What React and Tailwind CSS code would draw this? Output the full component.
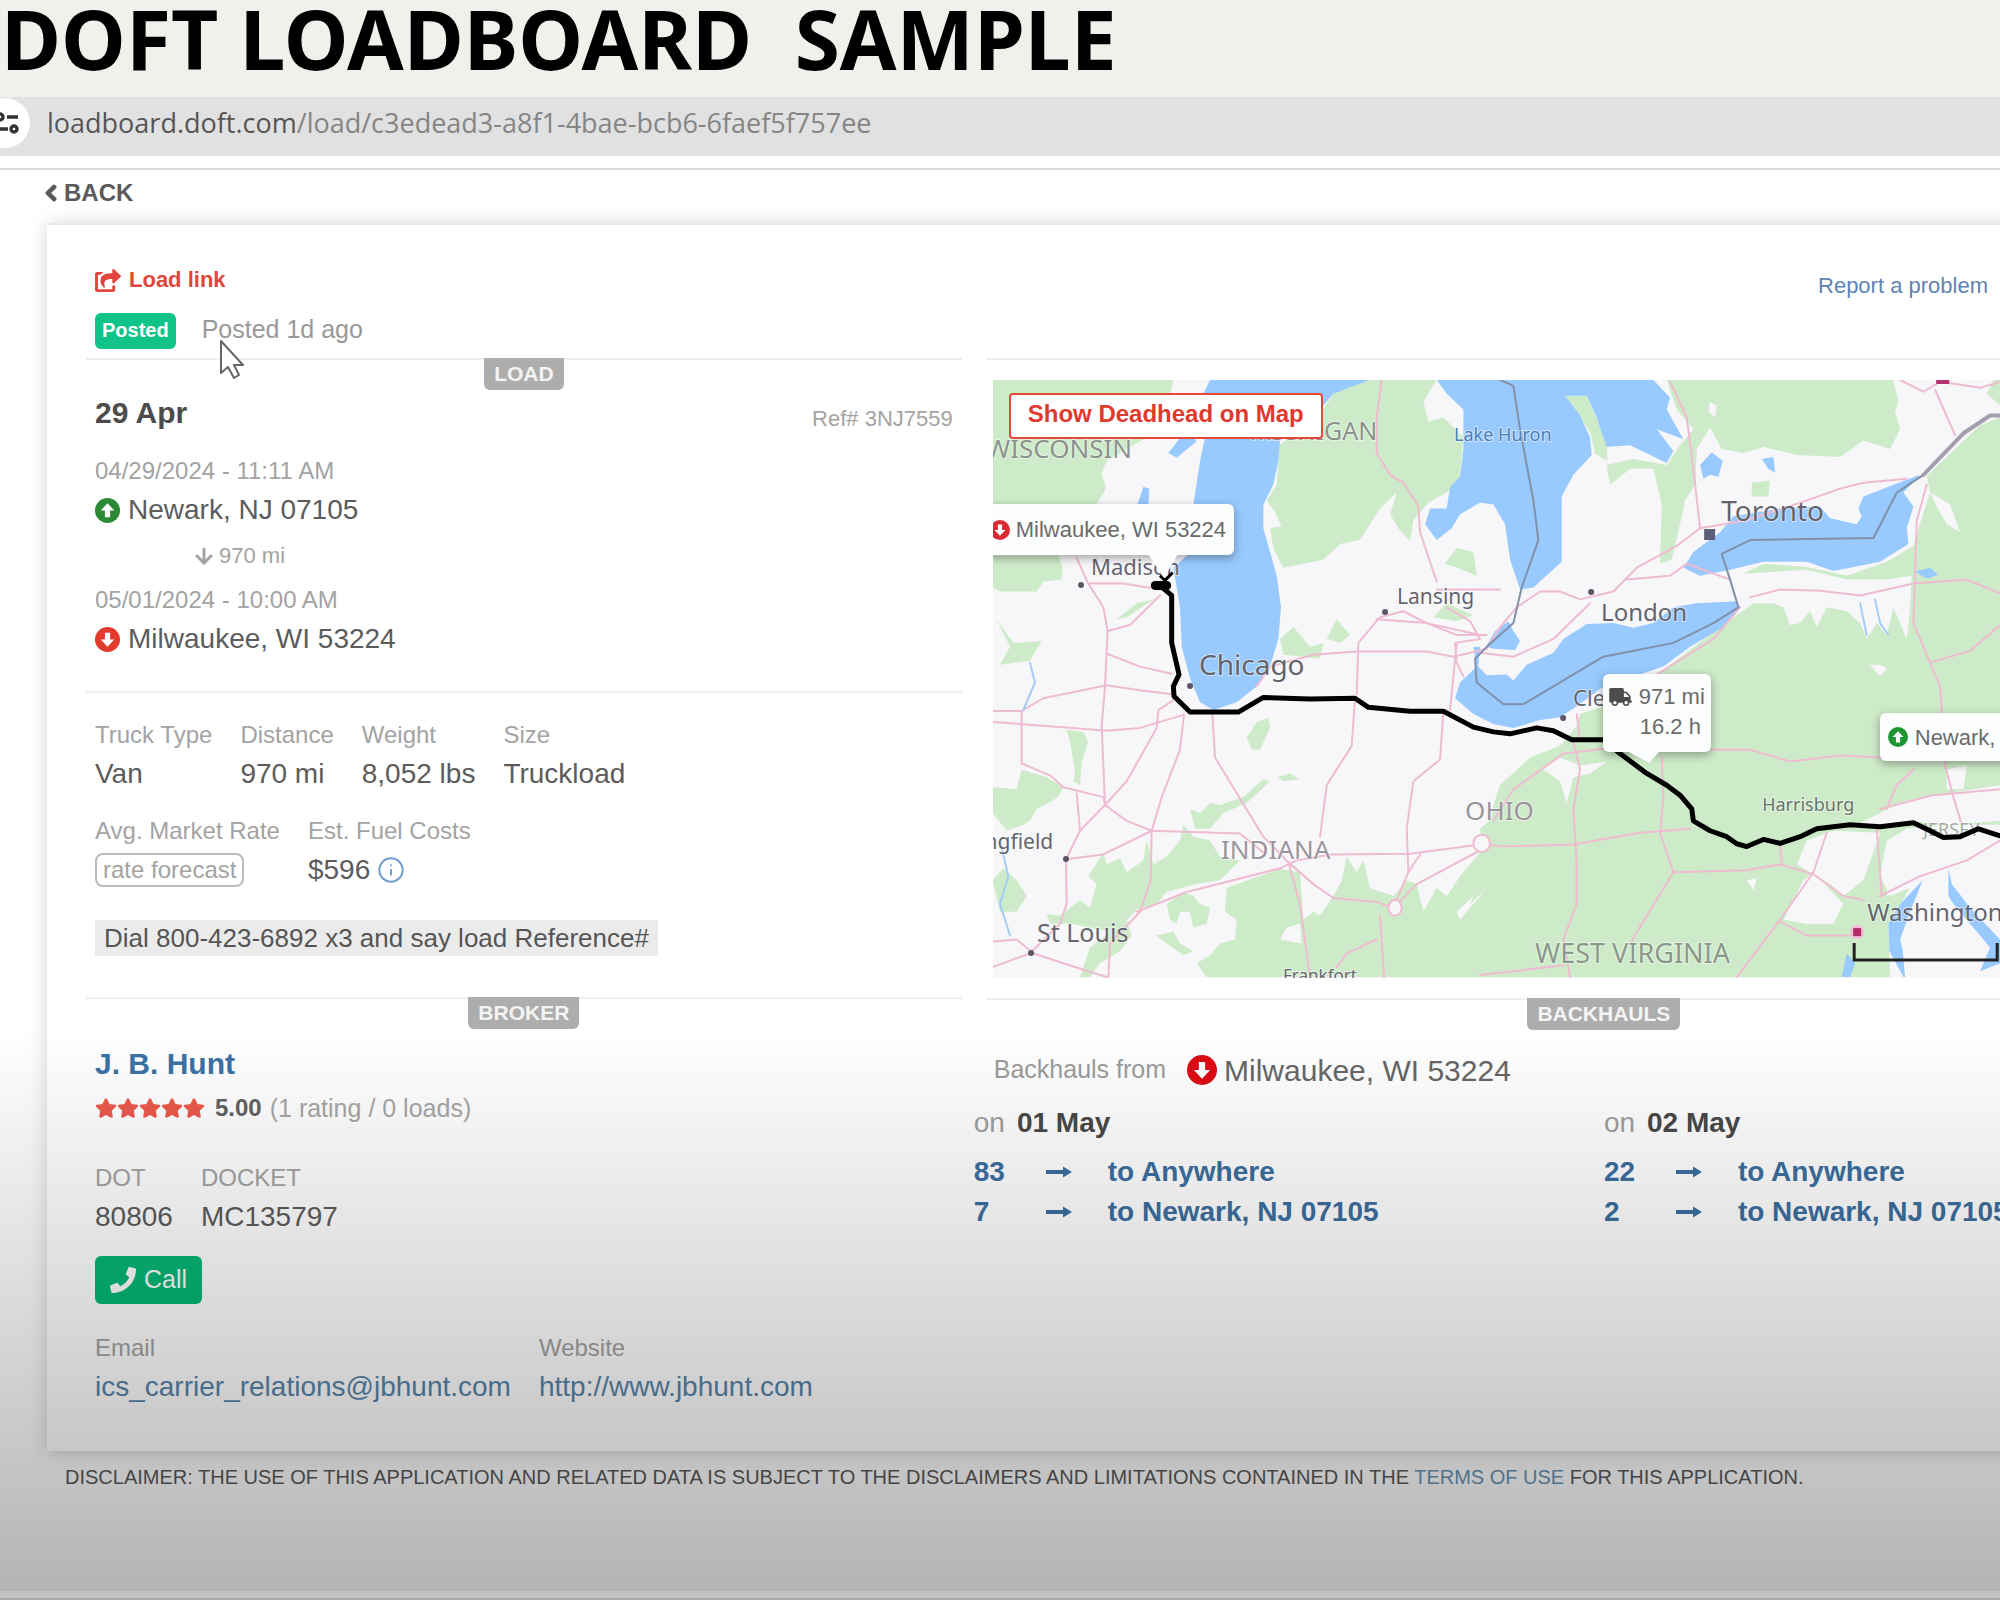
import React from "react";
import { ArrowDown, Info } from "lucide-react";
import { FaChevronLeft, FaPhone, FaShareSquare, FaStar, FaTruck } from "react-icons/fa";

const ARIAL = "font-['Liberation_Sans',Arial,sans-serif]";

function StopIcon({ down = false, className = "" }) {
  return (
    <svg viewBox="0 0 24 24" className={`shrink-0 ${className}`} aria-hidden="true">
      <circle cx="12" cy="12" r="12" fill="currentColor" />
      <path
        d={down ? "M9.5 5.5h5v6.5h4L12 19 5.5 12h4z" : "M9.5 18.5h5V12h4L12 5 5.5 12h4z"}
        fill="#fff"
      />
    </svg>
  );
}

function LongArrow() {
  return (
    <svg viewBox="0 0 26 14" className="h-[14px] w-[26px]" aria-hidden="true">
      <path d="M0 5h17V1.5L26 7l-9 5.5V9H0z" fill="currentColor" />
    </svg>
  );
}

function TuneIcon() {
  return (
    <svg viewBox="0 0 24 24" className="h-6 w-6" fill="none" stroke="#333" strokeWidth="3.4" aria-hidden="true">
      <circle cx="5" cy="6" r="3" />
      <path d="M12 6h11M0 18h13" />
      <circle cx="19" cy="18" r="3" />
    </svg>
  );
}

function SectionTag({ children }) {
  return (
    <div className="flex justify-center border-t-2 border-[#efefef]">
      <h2 className="-mt-0.5 h-8 rounded-b-md bg-[#adadad] px-2.5 text-[21px] leading-8 font-bold text-[#f4f4f4]">
        {children}
      </h2>
    </div>
  );
}

function Fact({ label, children }) {
  return (
    <div>
      <dt className="text-2xl leading-8 text-[#a3a3a3]">{label}</dt>
      <dd className="mt-[5px] flex h-9 items-center text-[28px] leading-9 text-[#5c5c5c]">{children}</dd>
    </div>
  );
}

const WATER = [
  "M690 25H1170L1060 60 1030 90 900 180 895 230 880 290 850 340 850 400 870 460 890 520 903 600 895 680 870 750 830 800 770 840 700 860 660 840 630 780 605 700 600 600 580 500 620 470 640 340 660 230 690 110 670 60Z",
  "M565 210L620 150 650 180 590 222Z",
  "M470 345L490 295 508 300 505 345Z",
  "M1370 25L1400 60 1450 100 1450 200 1440 270 1410 295 1400 350 1350 350 1335 390 1370 430 1415 400 1440 365 1500 335 1540 340 1575 390 1590 480 1620 555 1660 550 1745 485 1745 320 1780 265 1835 215 1830 170 1800 115 1755 65 1820 65 1850 120 1880 195 1950 190 2060 235 2080 205 2030 150 2110 175 2060 100 2070 70 2020 25Z",
  "M1518 700L1545 660 1585 635 1600 660 1620 685 1605 708 1540 705Z",
  "M1480 700L1490 750 1440 790 1425 830 1480 870 1540 895 1600 905 1680 885 1740 878 1790 850 1870 800 2050 750 2130 700 2230 650 2280 600 2270 585 2150 590 2080 600 2020 640 1960 652 1900 640 1820 642 1750 680 1720 715 1640 745 1600 785 1580 770 1520 772 1495 750 1500 700Z",
  "M2110 500L2140 460 2220 410 2260 370 2400 350 2520 345 2550 375 2630 390 2645 370 2635 350 2650 320 2740 290 2820 265 2770 310 2800 345 2780 400 2785 440 2700 485 2560 508 2480 485 2350 485 2250 505 2160 520Z",
  "M2170 275L2160 240 2195 208 2228 230 2215 270 2190 265Z",
  "M2345 225L2380 220 2385 260 2365 250Z",
  "M2828 1290L2760 1350 2725 1400 2728 1470 2770 1535H3060V1500L3000 1520 3030 1460 2950 1390 2905 1330 2905 1260 2915 1300 2970 1360 3060 1440V1535H2790L2760 1440 2790 1370Z",
  "M2805 510L2850 500 2875 518 2840 528Z",
  "M2585 1535L2600 1475 2625 1500 2610 1535Z",
];

const LAND_OVER_WATER = ["M2765 1440L2800 1385 2900 1330 2960 1390 3020 1450 2990 1535H2775Z"];

const WOODS = [
  "M38 25H580L570 60 600 100 560 150 480 180 380 230 365 262 378 300 345 345H38Z",
  "M38 470H235L248 500 245 530 190 535 170 560 60 560 38 550Z",
  "M1060 60L1140 25H1370L1330 80 1345 130 1390 120 1450 170 1440 270 1400 310 1345 335 1300 380 1290 432 1255 400 1230 365 1250 310 1200 350 1140 430 1080 440 1030 480 910 500 880 450 870 400 905 395 885 360 860 330 890 290 898 190 1030 100Z",
  "M1560 1060L1540 1130 1500 1160 1510 1210 1440 1280 1400 1330 1370 1310 1330 1370 1310 1300 1280 1290 1240 1330 1170 1310 1150 1240 1130 1270 1100 1230 1085 1290 1060 1330 1020 1380 1000 1370 970 1390 960 1270 900 1262 820 1285 740 1310 735 1370 770 1390 765 1440 720 1450 690 1480 650 1500 680 1535H1620V1060Z",
  "M200 1375L240 1380 300 1340 330 1360 350 1300 325 1280 370 1220 380 1250 420 1235 440 1270 490 1240 500 1190 520 1250 560 1230 600 1190 610 1150 640 1180 690 1190 720 1230 780 1240 720 1290 650 1300 560 1320 530 1350 470 1365 440 1390 455 1430 420 1470 360 1500 330 1535H300L330 1460 390 1420 270 1400 210 1400Z",
  "M560 1350L610 1320 640 1330 660 1350 690 1360 680 1400 640 1410 630 1370 600 1370 590 1400 570 1390Z",
  "M530 1430L580 1420 600 1450 640 1470 610 1480 560 1450Z",
  "M38 1055L110 1060 125 1010 200 1030 250 1055 235 1080 195 1100 170 1110 150 1140 130 1150 80 1165 38 1120Z",
  "M50 630L100 690 185 685 150 735 60 745 90 700Z",
  "M38 1290L70 1260 110 1290 140 1330 110 1370 60 1370Z",
  "M645 1160L630 1110 660 1120 690 1095 720 1100 790 1080 850 1035 870 1040 800 1095 730 1120 690 1160Z",
  "M800 930L830 890 865 880 870 905 840 960 815 960Z",
  "M890 1030L930 1020 960 1035 910 1040Z",
  "M900 680L940 650 990 700 1030 690 1020 730 910 720Z",
  "M1040 680L1070 630 1110 670 1080 690Z",
  "M1395 490L1430 450 1480 460 1490 520 1430 500Z",
  "M1360 625L1400 590 1480 620 1430 635Z",
  "M410 630L470 590 520 580 440 625Z",
  "M285 1010L270 940 260 910 310 915 325 940 305 990 300 1050 280 1040Z",
  "M1755 65H1820L1880 180 1882 230 1845 212 1832 160Z",
  "M2060 25H2740L2755 80 2745 105 2760 150 2730 200 2650 178 2580 220 2450 215 2350 195 2290 210 2225 200 2190 145 2150 200 2145 290 2115 330 2105 370 2075 480 2040 490 2045 340 2020 250 1950 250 1890 290 1880 240 1960 225 2060 240 2100 190 2140 150 2090 100Z",
  "M2315 320L2315 285 2370 280 2365 320Z",
  "M3060 120L3000 140 2840 268 2850 310 2815 400 2800 445 2720 485 2600 520 2480 498 2350 490 2290 515 2480 505 2600 530 2720 530 2795 520 2790 600 2780 680 2740 600 2720 670 2690 640 2660 680 2640 640 2600 610 2540 600 2510 650 2490 610 2460 640 2430 645 2410 600 2380 590 2320 590 2220 650 2040 765 1870 850 1800 870 1790 900 1740 950 1650 980 1560 1050 1540 1100 1520 1210 1610 1215 1560 1310 1470 1400V1535H2730L2725 1400 2790 1310 2730 1330 2700 1280 2720 1190 2780 1160 2900 1150 3060 1150Z",
  "M3060 25H3040L3020 60 3060 90Z",
];

const CLEARINGS = [
  "M1690 1010L1740 980 1800 1000 1880 990 1830 1020 1780 1030 1760 1095 1740 1040Z",
  "M2410 1390L2470 1290 2500 1270 2590 1350 2560 1400 2480 1400Z",
  "M2450 1250L2480 1190 2560 1165 2700 1170 2650 1290 2590 1330 2550 1300Z",
  "M2630 1150L2760 1095 2860 1075 3060 1050V1140L2900 1150 2800 1140 2700 1155Z",
  "M2670 745L2700 745 2720 755 2700 775Z",
  "M2850 310L2910 340 2940 410 2900 390 2870 345Z",
  "M2300 1290L2330 1285 2320 1315Z",
  "M2900 1010L2960 1000 2950 1060 2900 1060Z",
  "M900 1440L920 1410 960 1400 965 1450Z",
  "M1430 1370L1480 1330 1470 1350 1520 1310 1440 1390Z",
  "M2740 1180L2850 1180 2900 1230 2830 1290 2720 1330Z",
  "M2190 80L2210 90 2205 120 2185 105Z",
];

const ROADS = [
  "M38 1445L110 1440 160 1475 250 1500 380 1535M38 1510L150 1475 240 1400 260 1350 258 1237 300 1165 375 1100 440 1040 530 905 535 860 580 835",
  "M38 862H125L190 830 380 797 480 810 578 820M38 890L200 900 380 912 480 905 610 872",
  "M125 862V995L210 1025 250 1055 370 1080 375 1100 440 1140 515 1165 780 1172 850 1220",
  "M290 475L325 540 370 600 383 660 375 800 365 900 375 1100M325 540L430 540 540 555",
  "M383 660L450 645 540 570M383 718L480 750 575 768M290 1070L300 1165M258 1237L370 1225 515 1165",
  "M612 870L600 960 545 1080 515 1165 512 1290 480 1370 390 1450 385 1535",
  "M697 870L705 980 850 1180 925 1245 960 1350 990 1535M470 1370L620 1320 900 1260 950 1240 1050 1225 1290 1223 1500 1200",
  "M925 1245L1000 1300 1060 1335 1190 1345 1240 1360 1310 1300 1500 1215M1200 1380L1212 1535M1190 1440L1100 1475 1070 1510",
  "M1205 25L1190 120 1190 210 1230 265 1270 285 1315 345 1320 410 1370 535M1370 555H1560",
  "M830 800L870 750 1000 720 1130 712 1340 712 1420 725 1520 705M1130 820L1135 690 1200 625 1270 610 1340 640 1500 670",
  "M1190 630L1340 640 1430 670 1520 670M1400 600L1470 635 1500 680 1425 690 1430 740 1450 775M1430 690L1410 860",
  "M1125 830L1115 950 1040 1050 1020 1180M1390 863L1380 985 1300 1040 1280 1160 1285 1270M1250 1340L1285 1270 1320 1225",
  "M1520 705L1560 650 1610 600 1680 560H1740L1800 580 1900 560 1970 500 2090 445 2160 400 2140 250 2120 120 2070 30",
  "M1500 715L1600 725 1720 680 1830 590M1940 530L2070 520 2120 490 2250 530",
  "M2160 400L2300 380 2480 330 2580 300 2650 285 2780 275M2760 25L2830 55 2880 30 3000 45 3060 30M2865 50L2925 165",
  "M2310 575L2400 555 2520 558 2640 570 2800 540 2960 530 3060 565M2840 290L2810 380 2800 640 2850 740 2880 800 2895 1000 2920 1080 2945 1150",
  "M2850 740L2970 710 3060 645M2030 770L2200 680 2280 600M1800 935L1790 870",
  "M1500 1195L1560 1205 1780 1200 1980 1170 2060 1165 2130 1160M1780 940L1800 1010 1780 1110 1790 1250 1790 1350 1750 1440 1770 1535",
  "M1540 1140L1600 1060 1750 970 1900 955M2195 960L2310 960 2430 990 2580 975 2700 980M2045 980L2050 1080 2040 1170 2080 1270 2000 1380 1950 1450",
  "M2080 1270L2300 1265 2400 1250 2500 1275 2590 1330 2650 1340M2400 1200L2405 1245M2540 1170L2500 1270 2400 1390 2270 1535M2400 1395L2480 1430 2640 1430",
  "M2700 1110L2860 1075 3060 1060M2720 1110L2750 1050 2800 1010M2700 1330L2820 1280 2960 1240 3060 1190M2690 1160L2705 1330M1500 1530L1750 1505",
];

const BORDERS = [
  "M1560 25L1600 40 1620 150 1660 330 1675 430 1625 550 1600 640 1520 700 1485 730 1490 790 1570 845 1630 845 1740 790 1870 725 2080 690 2200 640 2275 600 2250 530 2225 465 2310 430 2680 425 2750 310 2830 265",
];

const ROUTE =
  "M540 545L575 570 575 690 597 770 580 800 582 825 630 865 775 865 850 828 990 832 1125 830 1165 853 1290 863 1390 863 1480 903 1540 915 1590 920 1670 905 1720 912 1775 935 1870 935 1920 970 2000 1020 2060 1050 2100 1075 2135 1110 2140 1140 2190 1165 2240 1180 2270 1198 2300 1205 2350 1187 2400 1197 2460 1180 2510 1160 2610 1150 2700 1155 2800 1145 2850 1165 2890 1182 2940 1180 2995 1160 3060 1178 3300 1180";

const LABELS = [
  { x: -7, y: 78, size: 26, fill: "#8c928c", text: "WISCONSIN" },
  { x: 257, y: 60, size: 25, fill: "#8c928c", text: "MICHIGAN" },
  { x: 461, y: 61, size: 18, fill: "#4f7db3", text: "Lake Huron" },
  { x: 98, y: 195, size: 22, fill: "#65656e", text: "Madison" },
  { x: 206, y: 295, size: 28, fill: "#63636c", text: "Chicago" },
  { x: 404, y: 224, size: 21, fill: "#65656e", text: "Lansing" },
  { x: 228, y: 479, size: 26, fill: "#9a949c", text: "INDIANA" },
  { x: 472, y: 440, size: 26, fill: "#9a949c", text: "OHIO" },
  { x: 44, y: 562, size: 25, fill: "#65656e", text: "St Louis" },
  { x: -47, y: 469, size: 21, fill: "#65656e", text: "Springfield" },
  { x: 290, y: 601, size: 17, fill: "#65656e", text: "Frankfort" },
  { x: 728, y: 141, size: 28, fill: "#63636c", text: "Toronto" },
  { x: 608, y: 241, size: 24, fill: "#63636c", text: "London" },
  { x: 580, y: 326, size: 22, fill: "#65656e", text: "Cleveland" },
  { x: 769, y: 431, size: 18, fill: "#68736a", text: "Harrisburg" },
  { x: 930, y: 456, size: 18, fill: "#a3ada3", text: "JERSEY" },
  { x: 542, y: 583, size: 27, fill: "#8a998a", text: "WEST VIRGINIA" },
  { x: 874, y: 541, size: 24, fill: "#63636c", text: "Washington" },
];

const TOWNS = [
  [88, 205],
  [392, 232],
  [73, 479],
  [38, 573],
  [598, 212],
  [570, 338],
  [197, 306],
];

function MapPicture() {
  return (
    <svg viewBox="0 0 1222 598" preserveAspectRatio="xMinYMin slice" className="block h-full w-full" role="img" aria-label="Route map">
      <rect width="1222" height="598" fill="#f7f7fa" />
      <rect x="1007" width="215" height="598" fill="#cdebc8" />
      <g transform="translate(-13 -10) scale(.3333 .3954)" strokeLinejoin="round" strokeLinecap="round">
        {WOODS.map((d) => <path key={d} d={d} fill="#cdebc8" />)}
        {CLEARINGS.map((d) => <path key={d} d={d} fill="#f7f7fa" />)}
        {WATER.map((d) => <path key={d} d={d} fill="#98caff" />)}
        {LAND_OVER_WATER.map((d) => <path key={d} d={d} fill="#f7f7fa" />)}
        <g fill="none" stroke="#efbbd0" strokeWidth="2">
          {ROADS.map((d) => <path key={d} d={d} vectorEffect="non-scaling-stroke" />)}
          <ellipse cx="1505" cy="1197" rx="25" ry="22" fill="#f7f7fa" vectorEffect="non-scaling-stroke" />
          <ellipse cx="1245" cy="1360" rx="20" ry="20" fill="#f7f7fa" vectorEffect="non-scaling-stroke" />
        </g>
        <g fill="none" strokeWidth="2">
          <path d="M150 740L165 790 130 860M60 1190L85 1280 60 1350 90 1430M2640 590L2660 670M2685 580L2700 640 2725 670" stroke="#a4cdf5" vectorEffect="non-scaling-stroke" />
          {BORDERS.map((d) => <path key={d} d={d} stroke="#8090a8" vectorEffect="non-scaling-stroke" />)}
          <path d="M2830 265L2950 160 3030 115 3300 118" stroke="#a49fae" strokeWidth="4" vectorEffect="non-scaling-stroke" />
        </g>
      </g>
      <g fontFamily="'Noto Sans', sans-serif">
        {LABELS.map((l) => (
          <text key={l.text} x={l.x} y={l.y} fontSize={l.size} fill={l.fill} stroke="#ffffff" strokeOpacity=".5" strokeWidth="2" paintOrder="stroke">
            {l.text}
          </text>
        ))}
      </g>
      {TOWNS.map(([x, y]) => <circle key={`${x}-${y}`} cx={x} cy={y} r="3" fill="#5d5566" />)}
      <rect x="711" y="149" width="11" height="11" fill="#5d5d78" />
      <path d="M943 0h13v4h-13z" fill="#b5306f" />
      <circle cx="864" cy="552" r="7" fill="#f4bcd6" />
      <rect x="860" y="548" width="8" height="8" fill="#b02a64" />
      <g transform="translate(-13 -10) scale(.3333 .3954)" fill="none" stroke="#000" strokeLinejoin="round">
        <path d={ROUTE} strokeWidth="5" vectorEffect="non-scaling-stroke" />
        <path d="M526 545H560" strokeWidth="9" strokeLinecap="round" vectorEffect="non-scaling-stroke" />
        <path d="M540 520L555 532 578 512" strokeWidth="3" vectorEffect="non-scaling-stroke" />
      </g>
      <path d="M861 563v17h143v-17" fill="none" stroke="#222" strokeWidth="3" />
    </svg>
  );
}

const CALLOUT = "absolute rounded-md bg-[#fcfdfd] text-[22px] text-[#6a6a6a] shadow-[0_3px_10px_rgba(0,0,0,0.35)]";

function RouteMap() {
  return (
    <div className="relative mx-[7px] my-5 h-[598px] overflow-hidden">
      <MapPicture />
      <button
        type="button"
        className="absolute top-[13px] left-4 h-[46px] rounded border-2 border-[#e8483c] bg-white px-[17px] pb-1 text-2xl font-bold text-[#e0392e]"
      >
        Show Deadhead on Map
      </button>
      <div className={`${CALLOUT} top-[124px] -left-[9px] flex h-[51px] items-center gap-1.5 pr-2 pl-1.5`}>
        <StopIcon down className="h-5 w-5 text-[#dd2b35]" />
        Milwaukee, WI 53224
        <svg viewBox="0 0 30 24" className="absolute top-[50px] left-[164px] h-6 w-[30px]" aria-hidden="true">
          <path d="M0 0h30L16 24z" fill="#fcfdfd" />
        </svg>
      </div>
      <div className={`${CALLOUT} top-[294px] left-[610px] h-[78px] px-1.5 pt-2 leading-[30px]`}>
        <div className="flex items-center gap-[7px]">
          <FaTruck className="h-[18px] w-[23px] text-[#4c4c4c]" />
          971 mi
        </div>
        <div className="pl-[31px]">16.2 h</div>
        <svg viewBox="0 0 62 24" className="absolute top-[66px] left-0 h-6 w-[62px]" aria-hidden="true">
          <path d="M2 0h60L57 11 46 23 22 10 4 6z" fill="#fcfdfd" />
        </svg>
      </div>
      <div className={`${CALLOUT} top-[333px] left-[887px] flex h-12 items-center gap-[7px] px-2`}>
        <StopIcon className="h-5 w-5 text-[#1f9432]" />
        Newark, NJ 07105
      </div>
    </div>
  );
}

const BACKHAULS = [
  { day: "01 May", any: 83, home: 7 },
  { day: "02 May", any: 22, home: 2 },
];

function Backhauls() {
  return (
    <div className="mt-5">
      <div className="flex h-10 items-center px-2 text-[25px] text-[#9b9b9b]">
        Backhauls from
        <StopIcon down className="ml-[21px] h-[30px] w-[30px] text-[#dd0a14]" />
        <span className="ml-[7px] text-[30px] text-[#666]">Milwaukee, WI 53224</span>
      </div>
      <div className="-mx-3 mt-[15px] grid grid-cols-2">
        {BACKHAULS.map((b) => (
          <div key={b.day}>
            <h3 className="text-[28px] leading-9 font-bold text-[#484848]">
              <span className="mr-[12px] font-normal text-[#a0a0a0]">on</span>
              {b.day}
            </h3>
            <ul className="mt-[11px] text-[28px] leading-10 font-bold text-[#3c6f9f]">
              {[[b.any, "to Anywhere"], [b.home, "to Newark, NJ 07105"]].map(([n, to]) => (
                <li key={to}>
                  <a href="#backhauls" className="grid grid-cols-[72px_62px_auto] items-center justify-start whitespace-nowrap">
                    <span>{n}</span>
                    <LongArrow />
                    <span>{to}</span>
                  </a>
                </li>
              ))}
            </ul>
          </div>
        ))}
      </div>
    </div>
  );
}

function LoadDetails() {
  return (
    <div className="px-[9px]">
      <div className="mt-[5px] flex items-center justify-between">
        <h3 className="text-[30px] leading-9 font-bold text-[#4b4b4b]">29 Apr</h3>
        <span className="mt-3 text-[22px] leading-6 text-[#a3a3a3]">Ref# 3NJ7559</span>
      </div>
      <p className="mt-6 text-2xl leading-8 text-[#a3a3a3]">04/29/2024 - 11:11 AM</p>
      <p className="mt-[5px] flex items-center gap-2 text-[28px] leading-9 text-[#5c5c5c]">
        <StopIcon className="h-[25px] w-[25px] text-[#2a8a36]" />
        Newark, NJ 07105
      </p>
      <p className="mt-[14px] ml-[97px] flex items-center gap-[3px] text-[22px] leading-7 text-[#a3a3a3]">
        <ArrowDown className="h-6 w-6" strokeWidth={3} />
        970 mi
      </p>
      <p className="mt-[14px] text-2xl leading-8 text-[#a3a3a3]">05/01/2024 - 10:00 AM</p>
      <p className="mt-[5px] flex items-center gap-2 text-[28px] leading-9 text-[#5c5c5c]">
        <StopIcon down className="h-[25px] w-[25px] text-[#e33a2e]" />
        Milwaukee, WI 53224
      </p>
    </div>
  );
}

function Equipment() {
  return (
    <div className="px-[9px] pb-[41px]">
      <dl className="mt-[26px] flex gap-7">
        <Fact label="Truck Type">Van</Fact>
        <Fact label="Distance">970 mi</Fact>
        <Fact label="Weight">8,052 lbs</Fact>
        <Fact label="Size">Truckload</Fact>
      </dl>
      <dl className="mt-[23px] flex gap-7">
        <Fact label="Avg. Market Rate">
          <button type="button" className="h-[34px] rounded-lg border-2 border-[#bcbcbc] px-1.5 text-2xl leading-7 text-[#a3a3a3]">
            rate forecast
          </button>
        </Fact>
        <Fact label="Est. Fuel Costs">
          $596
          <Info className="ml-[7px] h-7 w-7 text-[#6f9ccb]" strokeWidth={1.7} />
        </Fact>
      </dl>
      <p className="mt-8 w-fit bg-[#ebebeb] px-[9px] text-[26px] leading-9 text-[#555]">
        Dial 800-423-6892 x3 and say load Reference#
      </p>
    </div>
  );
}

function Broker() {
  return (
    <div className="px-[9px]">
      <a href="#broker" className="mt-[17px] block w-fit text-[30px] leading-9 font-bold text-[#3b71a5]">J. B. Hunt</a>
      <div className="mt-2.5 flex items-center text-[25px] leading-8 text-[#a6a6a6]">
        <span className="flex text-[22px] text-[#ec5a4c]">
          {[1, 2, 3, 4, 5].map((n) => <FaStar key={n} />)}
        </span>
        <b className="mr-2 ml-2.5 text-2xl text-[#626262]">5.00</b>
        (1 rating / 0 loads)
      </div>
      <dl className="mt-[38px] flex gap-7">
        <Fact label="DOT">80806</Fact>
        <Fact label="DOCKET">MC135797</Fact>
      </dl>
      <button type="button" className="mt-[21px] flex h-12 items-center gap-2 rounded-md bg-[#04b877] px-[15px] text-[25px] text-white">
        <FaPhone className="h-[26px] w-[26px]" />
        Call
      </button>
      <dl className="mt-7 flex gap-7">
        <Fact label="Email">
          <a href="mailto:ics_carrier_relations@jbhunt.com" className="text-[#5785ab]">ics_carrier_relations@jbhunt.com</a>
        </Fact>
        <Fact label="Website">
          <a href="http://www.jbhunt.com" className="text-[#5785ab]">http://www.jbhunt.com</a>
        </Fact>
      </dl>
    </div>
  );
}

export default function App() {
  return (
    <div className={`relative min-h-screen overflow-hidden bg-white ${ARIAL}`}>
      <h1 className="h-[97px] bg-[#f1f0eb] pl-px font-['Noto_Sans',sans-serif] text-[82px] leading-[76px] font-bold whitespace-pre text-black">
        DOFT LOADBOARD  SAMPLE
      </h1>
      <div className="flex h-[59px] items-center bg-[#e1e1e1] pb-2">
        <div className="-ml-5 flex h-[50px] w-[50px] items-center justify-end rounded-full bg-white pr-[11px]">
          <TuneIcon />
        </div>
        <p className="ml-[17px] font-['Open_Sans',sans-serif] text-[27px] leading-9 text-[#858585]">
          <span className="text-[#555]">loadboard.doft.com</span>/load/c3edead3-a8f1-4bae-bcb6-6faef5f757ee
        </p>
      </div>
      <div className="mt-3 h-0.5 bg-[#dcdcdc]" />

      <main className="pl-[47px]">
        <a href="#back" className="mt-[7px] -ml-0.5 flex w-fit items-center gap-[7px] text-2xl leading-8 font-bold text-[#5a5a5a]">
          <FaChevronLeft className="h-[18px] w-3" strokeWidth={50} stroke="currentColor" />
          BACK
        </a>
        <div className="mt-[14px] -mr-[261px] border-t-2 border-[#e8e8e8] bg-white px-[39px] pt-[39px] pb-[46px] shadow-[0_2px_18px_rgba(0,0,0,0.18)]">
          <header className="mr-[234px] flex justify-between pb-[9px] pl-[9px]">
            <div>
              <a href="#load-link" className="flex items-center gap-2 text-[22px] leading-8 font-bold text-[#e0463b]">
                <FaShareSquare className="h-[23px] w-[26px]" />
                Load link
              </a>
              <div className="relative mt-[17px] flex items-start gap-[26px]">
                <span className="h-9 rounded-md bg-[#0fc389] px-[7px] text-[20px] leading-[34px] font-bold text-white">Posted</span>
                <span className="text-[25px] leading-8 text-[#999]">Posted 1d ago</span>
                <svg viewBox="0 0 26 40" className="absolute top-[26px] left-[124px] h-10 w-[26px]" aria-hidden="true">
                  <path d="M2 2v32l7-6 6 11 5-3-5-10h9z" fill="#fff" stroke="#666" strokeWidth="2" strokeLinejoin="round" />
                </svg>
              </div>
            </div>
            <a href="#report" className="mt-1.5 text-[22px] leading-8 text-[#5f83b3]">Report a problem</a>
          </header>
          <div className="grid grid-cols-[41%_1fr] gap-x-6">
            <section>
              <SectionTag>LOAD</SectionTag>
              <LoadDetails />
              <hr className="mt-[34px] border-t-2 border-[#efefef]" />
              <Equipment />
              <SectionTag>BROKER</SectionTag>
              <Broker />
            </section>
            <section>
              <hr className="border-t-2 border-[#efefef]" />
              <RouteMap />
              <SectionTag>BACKHAULS</SectionTag>
              <Backhauls />
            </section>
          </div>
        </div>
        <p className="mt-3 ml-[18px] text-[20px] leading-7 text-[#5a5a5a]">
          DISCLAIMER: THE USE OF THIS APPLICATION AND RELATED DATA IS SUBJECT TO THE DISCLAIMERS AND LIMITATIONS CONTAINED IN THE{" "}
          <a href="#terms" className="text-[#6a94b5]">TERMS OF USE</a> FOR THIS APPLICATION.
        </p>
      </main>
      <div className="pointer-events-none absolute inset-x-0 bottom-0 h-[570px] bg-linear-to-b from-black/0 to-black/30" />
      <div className="pointer-events-none absolute inset-x-0 bottom-0 h-[9px] border-b-2 border-[#a9a9a9] bg-[#c2c2c2]" />
    </div>
  );
}
